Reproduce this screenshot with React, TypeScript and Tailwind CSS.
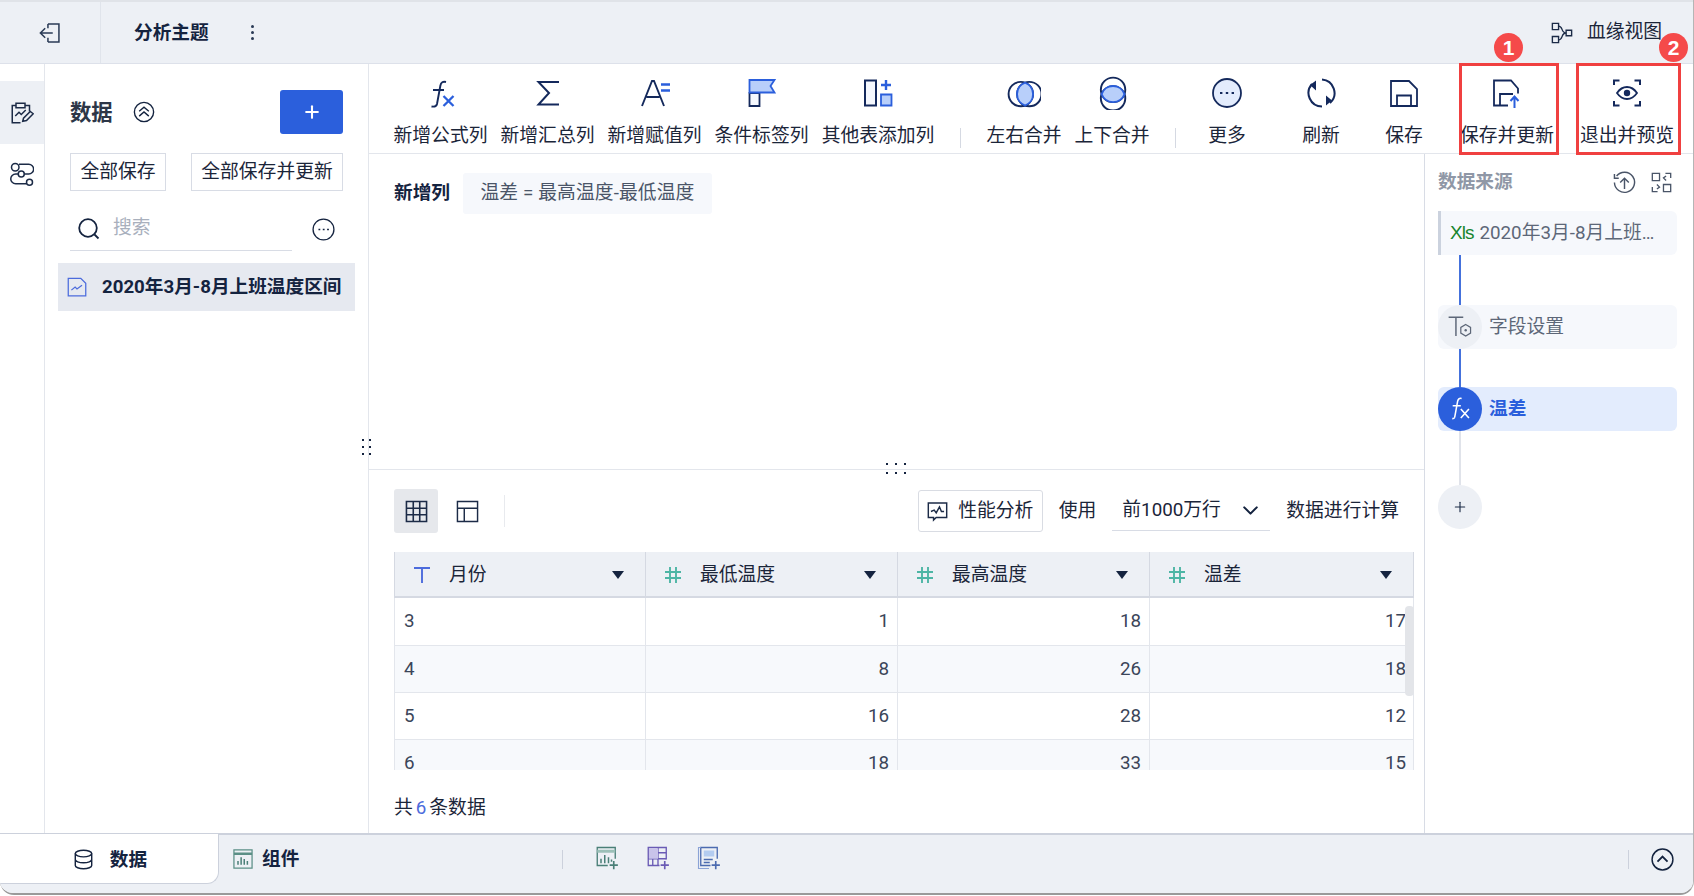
import type { ReactNode } from 'react'
import { ChevronDown, Plus } from 'lucide-react'

const NAVY = '#14295c'
const BLUE = '#2b5fdc'
const LIGHT = '#b8cffa'

function Svg({ size = 32, children, className = '' }: { size?: number; children: ReactNode; className?: string }) {
  return (
    <svg width={size} height={size} viewBox="0 0 32 32" fill="none" className={`shrink-0 ${className}`}>
      {children}
    </svg>
  )
}

const toolbarIcons: Record<string, ReactNode> = {
  fx: (
    <Svg>
      <path d="M21 5c-3-.8-5 .4-5.600 3.500L12 27c-.5 2.200-2.500 3-5.500 2.500M8 13h11" stroke={NAVY} strokeWidth="1.900" />
      <path d="M18.500 19l10 10M28.500 19l-10 10" stroke={BLUE} strokeWidth="2.300" />
    </Svg>
  ),
  sum: (
    <Svg>
      <path d="M27 5H6.500L17 16 6.500 27.500H27" stroke={NAVY} strokeWidth="2" />
    </Svg>
  ),
  assign: (
    <Svg>
      <path d="M3 29L13 4h2l10 25M7.500 20h13" stroke={NAVY} strokeWidth="1.900" />
      <path d="M22 7.500h9M22 13.500h9" stroke={BLUE} strokeWidth="2.400" />
    </Svg>
  ),
  flag: (
    <Svg>
      <path d="M3.500 16h10v13h-10z" fill="#f5f8fe" stroke={NAVY} strokeWidth="1.800" />
      <path d="M3.500 3h25l-4 6 4 6.500h-25z" fill={LIGHT} stroke={BLUE} strokeWidth="1.800" />
    </Svg>
  ),
  other: (
    <Svg>
      <path d="M3 3.500h11v25H3z" fill="#f5f8fe" stroke={NAVY} strokeWidth="2" />
      <path d="M24 3v10M19 8h10" stroke={BLUE} strokeWidth="2.400" />
      <path d="M19 17.500h10.500v11H19z" fill={LIGHT} stroke={BLUE} strokeWidth="1.800" />
    </Svg>
  ),
  lr: (
    <Svg size={34}>
      <circle cx="13" cy="17" r="11.500" stroke={NAVY} strokeWidth="1.800" />
      <circle cx="21" cy="17" r="11.500" stroke={NAVY} strokeWidth="1.800" />
      <path d="M17 6.200A11.500 11.500 0 0 1 17 27.800A11.500 11.500 0 0 1 17 6.200z" fill={LIGHT} stroke={BLUE} strokeWidth="1.800" />
    </Svg>
  ),
  tb: (
    <Svg size={34}>
      <circle cx="17" cy="13" r="11.500" stroke={NAVY} strokeWidth="1.800" />
      <circle cx="17" cy="21" r="11.500" stroke={NAVY} strokeWidth="1.800" />
      <path d="M6.200 17A11.500 11.500 0 0 1 27.800 17A11.500 11.500 0 0 1 6.200 17z" fill={LIGHT} stroke={BLUE} strokeWidth="1.800" />
    </Svg>
  ),
  more: (
    <Svg>
      <circle cx="16" cy="16" r="14" fill="#e3ecfd" stroke={NAVY} strokeWidth="1.800" />
      <path d="M9 16h2.400M14.800 16h2.400M20.600 16h2.400" stroke={NAVY} strokeWidth="2.200" />
    </Svg>
  ),
  refresh: (
    <Svg>
      <path d="M7 7A13.500 13.500 0 0 0 17 29.500M17 2.500A13.500 13.500 0 0 1 25 26" stroke={NAVY} strokeWidth="2" />
      <path d="M11 3.500v10L5 8zM21 28.500v-10l6 5z" fill={NAVY} />
    </Svg>
  ),
  save: (
    <Svg>
      <path d="M3 4h18l8 8v17H3z" stroke={NAVY} strokeWidth="1.800" />
      <path d="M9 29V18.500h14V29" stroke={NAVY} strokeWidth="1.800" />
    </Svg>
  ),
  saveUp: (
    <Svg>
      <path d="M17 28.500H3V3.500h17l7 8v5M9 28.500V17h13" stroke={NAVY} strokeWidth="1.800" />
      <path d="M23.500 31V20M19.500 24l4-4.500 4 4.500" stroke={BLUE} strokeWidth="2" />
    </Svg>
  ),
  preview: (
    <Svg>
      <path d="M3 8V3.500h5.500M23.500 3.500H29V8M3 24v4.500h5.500M23.500 28.500H29V24" stroke={NAVY} strokeWidth="2" />
      <path d="M6 16c5.500-8 14.500-8 20 0-5.500 8-14.500 8-20 0z" stroke={NAVY} strokeWidth="1.800" />
      <circle cx="16" cy="16" r="3.200" fill={NAVY} />
    </Svg>
  ),
}

type ToolItem = { label: string; icon: string; width: string }

const toolsLeft: ToolItem[] = [
  { label: '新增公式列', icon: 'fx', width: 'w-[107px]' },
  { label: '新增汇总列', icon: 'sum', width: 'w-[107px]' },
  { label: '新增赋值列', icon: 'assign', width: 'w-[107px]' },
  { label: '条件标签列', icon: 'flag', width: 'w-[107px]' },
  { label: '其他表添加列', icon: 'other', width: 'w-[126px]' },
]
const toolsMerge: ToolItem[] = [
  { label: '左右合并', icon: 'lr', width: 'w-[88px]' },
  { label: '上下合并', icon: 'tb', width: 'w-[88px]' },
]
const toolsRight: ToolItem[] = [
  { label: '更多', icon: 'more', width: 'w-[102px]' },
  { label: '刷新', icon: 'refresh', width: 'w-[86px]' },
  { label: '保存', icon: 'save', width: 'w-[80px]' },
  { label: '保存并更新', icon: 'saveUp', width: 'w-[126px]' },
  { label: '退出并预览', icon: 'preview', width: 'w-[114px]' },
]

function ToolButton({ item }: { item: ToolItem }) {
  return (
    <div className={`flex shrink-0 flex-col items-center pt-[13px] ${item.width}`}>
      <div className="flex h-[32px] items-center justify-center">{toolbarIcons[item.icon]}</div>
      <div className="mt-[13px] whitespace-nowrap text-[18.8px] leading-[28px] text-[#1b2539]">{item.label}</div>
    </div>
  )
}

function TopBar() {
  return (
    <div className="flex h-[64px] shrink-0 items-center border-b border-t-2 border-b-[#dde1ea] border-t-[#e0e3e8] bg-[#edf0f5]">
      <div className="flex h-full w-[101px] items-center justify-center border-r border-[#e0e4eb] pr-[1px]">
        <Svg size={22}>
          <path d="M13 3h16v26H13M13 3v6M13 23v6" stroke="#2a3a55" strokeWidth="2.200" />
          <path d="M2 16h18M9 9l-7 7 7 7" stroke="#2a3a55" strokeWidth="2.200" />
        </Svg>
      </div>
      <div className="ml-[33px] text-[18.67px] font-bold text-[#14233f]">分析主题</div>
      <div className="ml-[42px] flex flex-col gap-[3px]">
        <span className="h-[3px] w-[3px] rounded-full bg-[#2a3a55]" />
        <span className="h-[3px] w-[3px] rounded-full bg-[#2a3a55]" />
        <span className="h-[3px] w-[3px] rounded-full bg-[#2a3a55]" />
      </div>
      <div className="ml-auto flex items-center gap-[14px] pr-[31px]">
        <Svg size={22}>
          <path d="M2 2h9v9H2zM2 21h9v9H2zM22 12h8v8h-8z" stroke="#1c2b47" strokeWidth="2" />
          <path d="M11 6c7 0 3 10 11 10-8 0-4 10-11 10" stroke="#1c2b47" strokeWidth="2" />
        </Svg>
        <span className="text-[18.8px] text-[#1b2539]">血缘视图</span>
      </div>
    </div>
  )
}

function LeftRail() {
  return (
    <div className="w-[45px] shrink-0 border-r border-[#e3e6ec] pt-[17px]">
      <div className="flex h-[63px] items-center justify-center bg-[#edf0f5]">
        <Svg size={24}>
          <path d="M14 29H3V6h5M20 6h6v8" stroke="#1c2b47" strokeWidth="2" />
          <path d="M8 3h12v6H8z" stroke="#1c2b47" strokeWidth="2" />
          <path d="M7 20l5-5 3 3 6-6" stroke="#1c2b47" strokeWidth="2" />
          <path d="M17 27l1-4 9-9 4 3-9 9z" stroke="#1c2b47" strokeWidth="2" />
        </Svg>
      </div>
      <div className="mt-[18px] flex justify-center">
        <Svg size={24}>
          <path d="M12 3h13a6.500 6.500 0 0 1 0 13h-6M11 16H7.500a6.500 6.500 0 0 0 0 13H22" stroke="#1c2b47" strokeWidth="2" />
          <circle cx="7" cy="7" r="5" stroke="#1c2b47" strokeWidth="2" />
          <circle cx="15" cy="16" r="4" stroke="#1c2b47" strokeWidth="2" />
          <circle cx="26" cy="27" r="4" stroke="#1c2b47" strokeWidth="2" />
        </Svg>
      </div>
    </div>
  )
}

function DataPanel() {
  return (
    <div className="w-[324px] shrink-0 border-r border-[#e3e6ec] pt-[26px]">
      <div className="flex h-[44px] items-center pl-[25px] pr-[25px]">
        <span className="pt-[2px] text-[21.33px] font-bold text-[#2c3647]">数据</span>
        <Svg size={22} className="ml-[20px]">
          <circle cx="16" cy="16" r="14" stroke="#14233f" strokeWidth="2" />
          <path d="M9 15l7-6 7 6M9 22l7-6 7 6" stroke="#14233f" strokeWidth="2" />
        </Svg>
        <div className="ml-auto flex h-[44px] w-[63px] items-center justify-center rounded-[3px] bg-[#2b5fdc]">
          <Plus size={20} strokeWidth={2.5} className="text-white" />
        </div>
      </div>
      <div className="mt-[19px] flex items-center justify-between px-[25px]">
        <div className="flex h-[38px] w-[96px] items-center justify-center border border-[#d8dce5] text-[18.8px] text-[#1b2539]">全部保存</div>
        <div className="flex h-[38px] w-[152px] items-center justify-center whitespace-nowrap border border-[#d8dce5] text-[18.8px] text-[#1b2539]">全部保存并更新</div>
      </div>
      <div className="mt-[16px] flex items-center pl-[25px]">
        <div className="flex h-[44px] w-[222px] items-center border-b border-[#d8dce5] pl-[8px]">
          <svg width="22" height="22" viewBox="0 0 22 22" fill="none" className="shrink-0">
            <circle cx="10" cy="10" r="8.8" stroke="#14233f" strokeWidth="1.8" />
            <path d="M16.500 16.500l4 4" stroke="#14233f" strokeWidth="1.8" />
          </svg>
          <span className="ml-[13px] text-[18.8px] text-[#a9b0bd]">搜索</span>
        </div>
        <Svg size={23} className="ml-[20px]">
          <circle cx="16" cy="16" r="14.5" stroke="#14233f" strokeWidth="1.8" />
          <path d="M9 16h2.500M15 16h2.500M21 16h2.500" stroke="#14233f" strokeWidth="2.2" />
        </Svg>
      </div>
      <div className="ml-[13px] mt-[12px] flex h-[48px] w-[297px] items-center bg-[#e6e9f0] pl-[9px]">
        <Svg size={20}>
          <path d="M2 2h20l8 8v20H2z" stroke="#4c6bdc" strokeWidth="2" />
          <path d="M7 21l6-5 3 3 8-6" stroke="#4c6bdc" strokeWidth="2" />
        </Svg>
        <span className="ml-[15px] whitespace-nowrap text-[18.67px] font-bold text-[#14233f]">2020年3月-8月上班温度区间</span>
      </div>
    </div>
  )
}

function Toolbar() {
  return (
    <div className="flex h-[90px] shrink-0 border-b border-[#e3e6ec] pl-[18px]">
      {toolsLeft.map((item) => (
        <ToolButton key={item.label} item={item} />
      ))}
      <div className="ml-[19px] mt-[64px] h-[20px] w-px shrink-0 bg-[#d5d9e2]" />
      <div className="w-[19px] shrink-0" />
      {toolsMerge.map((item) => (
        <ToolButton key={item.label} item={item} />
      ))}
      <div className="ml-[19px] mt-[64px] h-[20px] w-px shrink-0 bg-[#d5d9e2]" />
      {toolsRight.map((item) => (
        <ToolButton key={item.label} item={item} />
      ))}
    </div>
  )
}

const HashIcon = () => (
  <svg width="18" height="18" viewBox="0 0 18 18" fill="none" className="shrink-0">
    <path d="M6 1v16M12 1v16M1 6h16M1 12h16" stroke="#4db5a5" strokeWidth="1.9" />
  </svg>
)

const TextIcon = () => (
  <svg width="18" height="18" viewBox="0 0 18 18" fill="none" className="shrink-0">
    <path d="M1 2h16M9 2v15" stroke="#4c6bdc" strokeWidth="1.9" />
  </svg>
)

const columns = [
  { name: '月份', icon: <TextIcon />, width: 'w-[252px]' },
  { name: '最低温度', icon: <HashIcon />, width: 'w-[252px]' },
  { name: '最高温度', icon: <HashIcon />, width: 'w-[252px]' },
  { name: '温差', icon: <HashIcon />, width: 'w-[264px]' },
]

const rows = [
  ['3', '1', '18', '17'],
  ['4', '8', '26', '18'],
  ['5', '16', '28', '12'],
  ['6', '18', '33', '15'],
]

function DataTable() {
  return (
    <div className="relative mt-[19px] h-[218px] w-[1020px] overflow-hidden">
      <div className="flex h-[46px] border-b-2 border-[#d5d9e2] bg-[#edf0f5]">
        {columns.map((col, i) => (
          <div key={col.name} className={`flex items-center border-r border-[#d5d9e2] pl-[18px] pt-[1px] ${col.width} ${i === 0 ? 'border-l' : ''} ${i === 3 ? 'pr-[21px]' : 'pr-[21px]'}`}>
            {col.icon}
            <span className="ml-[18px] pt-[1px] text-[18.8px] text-[#1b2539]">{col.name}</span>
            <span className="ml-auto h-0 w-0 border-x-[6px] border-t-[8px] border-x-transparent border-t-[#14233f]" />
          </div>
        ))}
      </div>
      {rows.map((row, r) => (
        <div key={row[0]} className={`flex border-b border-[#e3e6ec] ${r === 0 ? 'h-[48px]' : 'h-[47px]'} ${r % 2 === 1 ? 'bg-[#f7f9fc]' : 'bg-white'}`}>
          {row.map((cell, c) => (
            <div key={c} className={`flex items-center border-r border-[#e3e6ec] text-[18.8px] text-[#3b4559] ${columns[c].width} ${c === 0 ? 'justify-start border-l pl-[9px]' : c === 3 ? 'justify-end pr-[7px]' : 'justify-end pr-[8px]'}`}>
              {cell}
            </div>
          ))}
        </div>
      ))}
      <div className="absolute right-0 top-[54px] h-[90px] w-[9px] rounded-[4px] bg-[#e3e5e9]" />
    </div>
  )
}

function CenterPane() {
  return (
    <div className="relative min-w-0 flex-1">
      <div className="flex h-[316px] items-start border-b border-[#e3e6ec] pl-[25px] pt-[19px]">
        <span className="mt-[6px] text-[18.67px] font-bold text-[#14233f]">新增列</span>
        <div className="ml-[13px] flex h-[41px] w-[249px] items-center justify-center whitespace-nowrap rounded-[3px] bg-[#f6f8fc] text-[18.8px] tracking-[0.1px] text-[#4a5568]">温差 = 最高温度-最低温度</div>
      </div>
      <div className="px-[25px] pt-[19px]">
        <div className="flex h-[44px] items-center">
          <div className="flex h-[44px] w-[44px] items-center justify-center rounded-[3px] bg-[#e6e8ec]">
            <Svg size={23}>
              <path d="M2 2h28v28H2zM2 11.500h28M2 20.500h28M11.500 2v28M20.500 2v28" stroke="#1c2b47" strokeWidth="2.2" />
            </Svg>
          </div>
          <Svg size={23} className="ml-[18px]">
            <path d="M2 2h28v28H2zM2 11.500h28M11.500 11.500V30" stroke="#1c2b47" strokeWidth="2" />
          </Svg>
          <div className="ml-[25px] h-[32px] w-px bg-[#e8eaee]" />
          <div className="ml-auto flex items-center">
            <div className="flex h-[42px] w-[125px] items-center justify-center gap-[10px] rounded-[3px] border border-[#d9dce3] text-[18.8px] text-[#1b2539]">
              <Svg size={21}>
                <path d="M2 3h28v22H14l-4 4v-4H2z" stroke="#1c2b47" strokeWidth="2.2" />
                <path d="M6 16l5-2 3 4 5-9 3 7h4" stroke="#1c2b47" strokeWidth="2.2" />
              </Svg>
              性能分析
            </div>
            <span className="ml-[16px] text-[18.8px] text-[#1b2539]">使用</span>
            <div className="ml-[16px] flex h-[40px] w-[158px] items-center justify-between border-b border-[#d8dce5] pl-[10px] pr-[7px] text-[18.8px] text-[#1b2539]">
              前1000万行
              <ChevronDown size={25} strokeWidth={2} className="text-[#14233f]" />
            </div>
            <span className="ml-[16px] text-[18.8px] text-[#1b2539]">数据进行计算</span>
          </div>
        </div>
        <DataTable />
        <div className="mt-[24px] flex items-center text-[18.8px] leading-[28px] text-[#1b2539]">
          共<span className="mx-[3px] text-[#4c6bdc]">6</span>条数据
        </div>
      </div>
      {/* drag handle on the splitter between top and bottom */}
      <div className="absolute left-[517px] top-[309px] grid grid-cols-3 gap-x-[7px] gap-y-[7px]">
        {[0, 1, 2, 3, 4, 5].map((d) => (
          <span key={d} className="h-[2px] w-[2px] bg-[#14233f]" />
        ))}
      </div>
    </div>
  )
}

function FlowRow({ active, circle, children }: { active?: boolean; circle: ReactNode; children: ReactNode }) {
  return (
    <div className={`relative flex h-[44px] items-center rounded-[6px] ${active ? 'bg-[#e3ecfd]' : 'bg-[#f6f8fc]'}`}>
      <div className={`flex h-[44px] w-[44px] items-center justify-center rounded-full ${active ? 'bg-[#2b5fdc]' : 'bg-[#edf0f5]'}`}>{circle}</div>
      {children}
    </div>
  )
}

function SourcePanel() {
  return (
    <div className="w-[269px] shrink-0 border-l border-[#d8dce5] pl-[13px] pr-[16px] pt-[12px]">
      <div className="flex h-[32px] items-center">
        <span className="text-[18.67px] font-bold text-[#8f97a6]">数据来源</span>
        <Svg size={23} className="ml-auto">
          <path d="M5 7a14 14 0 1 1-3 9M2 4v6h6" stroke="#4a5568" strokeWidth="2" />
          <path d="M16 25V10M10 16l6-6 6 6" stroke="#4a5568" strokeWidth="2" />
        </Svg>
        <Svg size={21} className="ml-[15px] mr-[5px]">
          <path d="M2 2h11v11H2zM19 19h11v11H19zM2 23v7h8M30 9V2h-8" stroke="#4a5568" strokeWidth="2" />
          <path d="M23 6l-4 3 4 4M9 19l4 4-4 3" stroke="#4a5568" strokeWidth="2" />
        </Svg>
      </div>
      <div className="mt-[13px] flex h-[44px] items-center rounded-r-[6px] border-l-[3px] border-[#cbd2de] bg-[#f6f8fc] pl-[9px] pr-[10px]">
        <span className="shrink-0 text-[19px] tracking-[-1px] text-[#17852d] [font-family:'Liberation_Sans',sans-serif]">Xls</span>
        <span className="ml-[6px] truncate text-[18.8px] text-[#5d6778]">2020年3月-8月上班温度区间</span>
      </div>
      <div className="ml-[21px] h-[50px] w-[2px] bg-[#4471dc]" />
      <FlowRow
        circle={
          <Svg size={26}>
            <path d="M2 4h18M11 4v23" stroke="#5d6778" strokeWidth="1.8" />
            <path d="M23 13l6 3.500v7L23 27l-6-3.500v-7z" stroke="#5d6778" strokeWidth="1.5" />
            <circle cx="23" cy="20" r="1.5" fill="#5d6778" />
          </Svg>
        }
      >
        <span className="ml-[7px] text-[18.8px] text-[#5d6778]">字段设置</span>
      </FlowRow>
      <div className="ml-[21px] h-[38px] w-[2px] bg-[#4471dc]" />
      <FlowRow
        active
        circle={
          <Svg size={26}>
            <path d="M18 3c-3-.6-4.400.8-5 4L9.500 26c-.4 1.600-1.400 2-3 1.800M7 12h10" stroke="#fff" strokeWidth="1.9" />
            <path d="M17 16l10 11M27 16L17 27" stroke="#fff" strokeWidth="2" />
          </Svg>
        }
      >
        <span className="ml-[7px] text-[18.67px] font-bold text-[#2b5fdc]">温差</span>
      </FlowRow>
      <div className="ml-[21px] h-[54px] w-[2px] bg-[#e0e3ea]" />
      <div className="flex h-[44px] w-[44px] items-center justify-center rounded-full bg-[#edf0f5]">
        <Plus size={16} strokeWidth={1.7} className="text-[#1c2b47]" />
      </div>
    </div>
  )
}

function BottomBar() {
  return (
    <div className="flex h-[60px] shrink-0 items-start border-t-2 border-[#ccd1dc] bg-[#edf0f5]">
      <div className="-mt-[1px] flex h-[50px] w-[219px] shrink-0 items-center justify-center gap-[16px] rounded-br-[12px] border-b border-r border-[#ccd1dc] bg-white pl-[2px] pt-[2px]">
        <Svg size={21}>
          <ellipse cx="16" cy="7" rx="12.5" ry="5" stroke="#14233f" strokeWidth="2.2" />
          <path d="M3.500 7v18c0 2.800 5.600 5 12.500 5s12.500-2.200 12.500-5V7M3.500 16c0 2.800 5.600 5 12.500 5s12.500-2.200 12.500-5" stroke="#14233f" strokeWidth="2.2" />
        </Svg>
        <span className="text-[18.67px] font-bold text-[#14233f]">数据</span>
      </div>
      <div className="ml-[14px] mt-[10px] flex items-center gap-[9px]">
        <Svg size={20}>
          <path d="M1.500 1.500h29v29h-29z" stroke="#5b8f86" strokeWidth="2" />
          <path d="M1.500 7.500h29" stroke="#5b8f86" strokeWidth="4" />
          <path d="M8 25v-6M13 25V13M18 25v-9M23 25v-6" stroke="#4a7f77" strokeWidth="2.4" />
        </Svg>
        <span className="text-[18.67px] font-bold text-[#14233f]">组件</span>
      </div>
      <div className="ml-[263px] mt-[15px] h-[19px] w-px bg-[#ccd1dc]" />
      <div className="ml-[32px] mt-[11px] flex items-center gap-[27px]">
        <Svg size={24}>
          <path d="M27 17V2H3v24h14" stroke="#4a7f77" strokeWidth="1.8" />
          <path d="M3 7h24" stroke="#9cc0b8" strokeWidth="4" />
          <path d="M8 23v-6M13 23V12M18 23v-8M22 21v-3" stroke="#4a7f77" strokeWidth="2" />
          <path d="M25 20v11M19.500 25.500h11" stroke="#4a7f77" strokeWidth="2.2" />
        </Svg>
        <Svg size={24}>
          <path d="M27 18V2H3v24h15" stroke="#6a5bb5" strokeWidth="1.8" />
          <path d="M3 17h24M16 2v24M16 9h11M9 17v9" stroke="#6a5bb5" strokeWidth="1.8" />
          <path d="M4 3h12v14H4z" fill="#c9c3ea" />
          <path d="M25 20v11M19.500 25.500h11" stroke="#6a5bb5" strokeWidth="2.2" />
        </Svg>
        <Svg size={24}>
          <path d="M27 17V2H5v24h13" stroke="#4c6bb0" strokeWidth="1.8" />
          <path d="M5 2H2v28h14" stroke="#8ba3d6" strokeWidth="1.5" />
          <path d="M9 6h14v8H9z" fill="#b4ccf0" />
          <path d="M9 18h12M9 22h8" stroke="#4c6bb0" strokeWidth="1.8" />
          <path d="M25 20v11M19.500 25.500h11" stroke="#4c6bb0" strokeWidth="2.2" />
        </Svg>
      </div>
      <div className="ml-auto mt-[15px] h-[19px] w-px bg-[#ccd1dc]" />
      <Svg size={23} className="ml-[22px] mr-[19px] mt-[13px]">
        <circle cx="16" cy="16" r="14.5" stroke="#14233f" strokeWidth="2" />
        <path d="M9 19l7-7 7 7" stroke="#14233f" strokeWidth="2.6" />
      </Svg>
    </div>
  )
}

export default function App() {
  return (
    <div className="relative h-[896px] w-[1694px] overflow-hidden bg-white [font-family:Roboto,'Noto_Sans_CJK_SC',sans-serif]">
      <div className="flex h-[895px] flex-col overflow-hidden rounded-b-[14px] border-b-2 border-r border-b-[#9a9a9a] border-r-[#b5b5b5] bg-white">
        <TopBar />
        <div className="flex min-h-0 flex-1">
          <LeftRail />
          <DataPanel />
          <div className="flex min-w-0 flex-1 flex-col">
            <Toolbar />
            <div className="flex min-h-0 flex-1">
              <CenterPane />
              <SourcePanel />
            </div>
          </div>
        </div>
        <BottomBar />
      </div>

      {/* splitter grip between the data panel and the editor */}
      <div className="absolute left-[362px] top-[439px] grid grid-cols-2 gap-x-[5px] gap-y-[5px]">
        {[0, 1, 2, 3, 4, 5].map((d) => (
          <span key={d} className="h-[2px] w-[2px] bg-[#14233f]" />
        ))}
      </div>

      {/* red annotation boxes and numbered badges */}
      <div className="absolute left-[1459px] top-[63px] h-[92px] w-[100px] border-[3px] border-[#f04040]" />
      <div className="absolute left-[1576px] top-[63px] h-[92px] w-[105px] border-[3px] border-[#f04040]" />
      <div className="absolute left-[1494px] top-[33px] flex h-[29px] w-[29px] items-center justify-center rounded-full bg-[#f54a4a] text-[21px] font-bold text-white [font-family:'Liberation_Sans',sans-serif]">1</div>
      <div className="absolute left-[1659px] top-[33px] flex h-[29px] w-[29px] items-center justify-center rounded-full bg-[#f54a4a] text-[21px] font-bold text-white [font-family:'Liberation_Sans',sans-serif]">2</div>
    </div>
  )
}
